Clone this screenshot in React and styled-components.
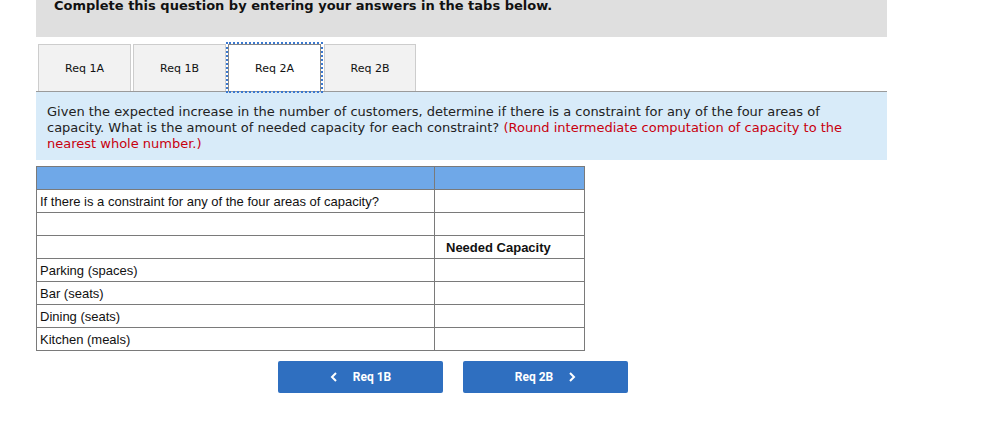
import React from 'react';
import styled, { createGlobalStyle } from 'styled-components';

const GlobalStyle = createGlobalStyle`
  body {
    margin: 0;
    background: #fff;
    font-family: "DejaVu Sans", Verdana, sans-serif;
  }
`;

const Page = styled.div`
  width: 851px;
  margin-left: 36px;
`;

const Banner = styled.div`
  height: 37px;
  background: #dfdfdf;
  padding-left: 18px;
  overflow: hidden;
`;

const BannerText = styled.div`
  margin-top: -1px;
  font-size: 13px;
  font-weight: bold;
  line-height: 14px;
  color: #111;
`;

const TabBar = styled.div`
  display: flex;
  align-items: flex-end;
  gap: 2px;
  margin-top: 7px;
  padding-left: 2px;
  border-bottom: 1px solid #9a9a9a;
`;

const Tab = styled.div`
  width: ${(p) => (p.$afterActive ? '92px' : '93px')};
  height: 47px;
  box-sizing: border-box;
  display: flex;
  align-items: center;
  justify-content: center;
  font-size: 11px;
  color: #111;
  background: ${(p) => (p.$active ? '#fff' : '#f2f2f2')};
  border: 1px solid ${(p) => (p.$active ? '#888' : '#cdcdcd')};
  border-bottom: none;
  outline: ${(p) => (p.$active ? '2px dotted #3a78cf' : 'none')};
  margin-left: ${(p) => (p.$afterActive ? '1px' : '0')};
`;

const Prompt = styled.div`
  background: #d8ebf9;
  padding: 12px 11px 8px 11px;
  font-size: 13px;
  line-height: 16px;
  color: #222;
`;

const Hint = styled.span`
  color: #c8000e;
`;

const Table = styled.table`
  margin-top: 6px;
  border-collapse: collapse;
  font-family: "Liberation Sans", Arial, sans-serif;
  font-size: 13px;
  color: #111;
`;

const Row = styled.tr`
  height: 23px;
  background: ${(p) => (p.$head ? '#6fa8e8' : '#fff')};
`;

const Cell = styled.td`
  box-sizing: border-box;
  border: 1px solid #7a7a7a;
  padding: 1px 0 0 ${(p) => (p.$indent ? '11px' : '3px')};
  width: ${(p) => (p.$wide ? '398px' : '150px')};
  height: 23px;
  font-weight: ${(p) => (p.$bold ? 'bold' : 'normal')};
  vertical-align: middle;
`;

const Nav = styled.div`
  display: flex;
  gap: 20px;
  margin: 10px 0 0 242px;
`;

const NavButton = styled.div`
  width: 165px;
  height: 32px;
  border-radius: 2px;
  background: #2f6fc0;
  color: #fff;
  display: flex;
  align-items: center;
  justify-content: center;
  gap: 15px;
  box-sizing: border-box;
  font-family: Roboto, "Liberation Sans", sans-serif;
  font-size: 12px;
  font-weight: bold;
`;

const Chevron = ({ dir }) => (
  <svg width="8" height="10" viewBox="0 0 8 10">
    <path
      d={dir === 'left' ? 'M6 1 L2 5 L6 9' : 'M2 1 L6 5 L2 9'}
      fill="none"
      stroke="#fff"
      strokeWidth="2"
    />
  </svg>
);

const tabs = ['Req 1A', 'Req 1B', 'Req 2A', 'Req 2B'];
const areas = ['Parking (spaces)', 'Bar (seats)', 'Dining (seats)', 'Kitchen (meals)'];

export default function App() {
  return (
    <>
      <GlobalStyle />
      <Page>
        <Banner>
          <BannerText>Complete this question by entering your answers in the tabs below.</BannerText>
        </Banner>
        <TabBar>
          {tabs.map((t, i) => (
            <Tab key={t} $active={t === 'Req 2A'} $afterActive={tabs[i - 1] === 'Req 2A'}>
              {t}
            </Tab>
          ))}
        </TabBar>
        <Prompt>
          Given the expected increase in the number of customers, determine if there is a constraint for any of the four areas of capacity. What is the amount of needed capacity for each constraint?{' '}
          <Hint>(Round intermediate computation of capacity to the nearest whole number.)</Hint>
        </Prompt>
        <Table>
          <tbody>
            <Row $head>
              <Cell $wide />
              <Cell />
            </Row>
            <Row>
              <Cell $wide>If there is a constraint for any of the four areas of capacity?</Cell>
              <Cell />
            </Row>
            <Row>
              <Cell $wide />
              <Cell />
            </Row>
            <Row>
              <Cell $wide />
              <Cell $bold $indent>Needed Capacity</Cell>
            </Row>
            {areas.map((a) => (
              <Row key={a}>
                <Cell $wide>{a}</Cell>
                <Cell />
              </Row>
            ))}
          </tbody>
        </Table>
        <Nav>
          <NavButton>
            <Chevron dir="left" />
            Req 1B
          </NavButton>
          <NavButton>
            Req 2B
            <Chevron dir="right" />
          </NavButton>
        </Nav>
      </Page>
    </>
  );
}
